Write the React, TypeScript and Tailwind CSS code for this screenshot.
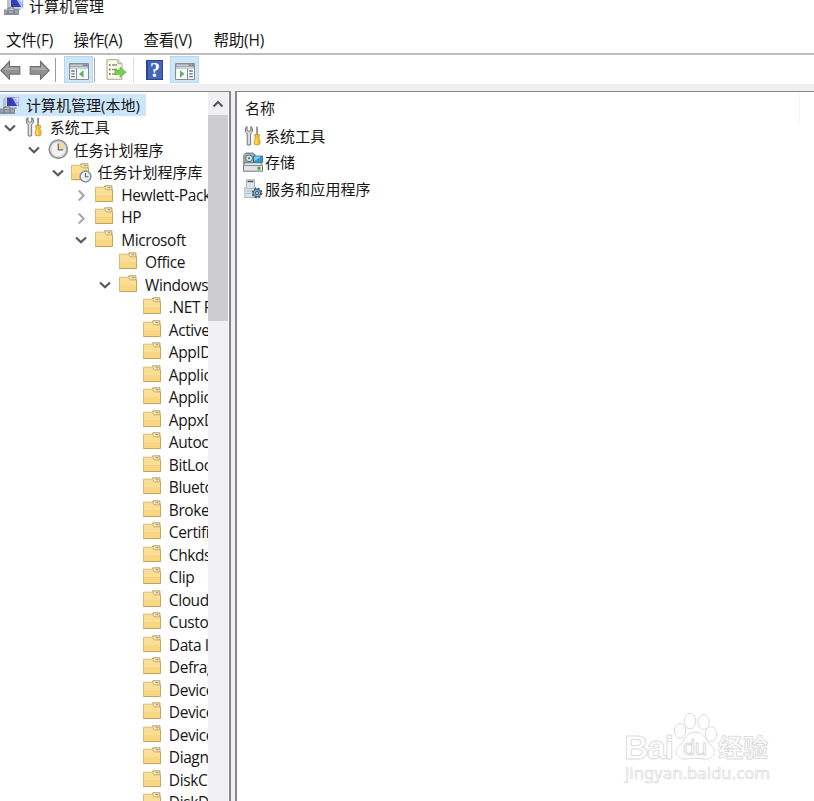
import type { ReactNode } from 'react'
import clsx from 'clsx'

type IconName = 'computer' | 'tools' | 'clock' | 'library' | 'folder'

type Node = {
  label: string
  depth: number
  icon: IconName
  state?: 'open' | 'closed'
}

const INDENT = 23.8

const windowsTasks = [
  '.NET Framework',
  'Active Directory Rights',
  'AppID',
  'Application Experience',
  'ApplicationData',
  'AppxDeploymentClient',
  'Autochk',
  'BitLocker',
  'Bluetooth',
  'BrokerInfrastructure',
  'CertificateServices',
  'Chkdsk',
  'Clip',
  'CloudExperienceHost',
  'Customer Experience',
  'Data Integrity Scan',
  'Defrag',
  'Device Information',
  'Device Setup',
  'DeviceDirectoryClient',
  'Diagnosis',
  'DiskCleanup',
  'DiskDiagnostic',
]

const tree: Node[] = [
  { label: '计算机管理(本地)', depth: 0, icon: 'computer' },
  { label: '系统工具', depth: 1, icon: 'tools', state: 'open' },
  { label: '任务计划程序', depth: 2, icon: 'clock', state: 'open' },
  { label: '任务计划程序库', depth: 3, icon: 'library', state: 'open' },
  { label: 'Hewlett-Packard', depth: 4, icon: 'folder', state: 'closed' },
  { label: 'HP', depth: 4, icon: 'folder', state: 'closed' },
  { label: 'Microsoft', depth: 4, icon: 'folder', state: 'open' },
  { label: 'Office', depth: 5, icon: 'folder' },
  { label: 'Windows', depth: 5, icon: 'folder', state: 'open' },
  ...windowsTasks.map((label): Node => ({ label, depth: 6, icon: 'folder' })),
]

function ComputerIcon() {
  return (
    <svg width="20" height="20" viewBox="0 0 20 20">
      <path d="M3 4l3-2v11H3z" fill="#b9bdc4" />
      <path d="M5.5 1.5H19.5v11H5.5z" fill="#cdd2df" />
      <path d="M7 2.5h11.5v8.5H7z" fill="#3440b8" />
      <path d="M12 2.5h6.5V11h-1.5z" fill="#a9bff0" />
      <path d="M14.5 2.5h4v5z" fill="#d5e0fa" />
      <path d="M11 12.5h5l1 1.5h-7z" fill="#9a9ea7" />
      <path d="M0 13.5h15V19H0z" fill="#8b929b" />
      <path d="M4 14v-2h6v2" fill="none" stroke="#69717b" />
      <path d="M1 16h13" stroke="#b9bfc6" />
      <path d="M4 15v3M10 15v3" stroke="#636b75" />
    </svg>
  )
}

function ToolsIcon() {
  return (
    <svg width="18" height="20" viewBox="0 0 18 20">
      <path
        d="M3 .8C.6 2.4.7 6 3.2 7.6V18.4q1.7 1.6 3.4 0V7.6C9.1 6 9.2 2.4 6.8.8V4.4L5 5.4 3 4.4z"
        fill="#dcdedf"
        stroke="#7b7f83"
        strokeWidth="1.1"
      />
      <path d="M12.2.8h1.7v9h-1.7z" fill="#84898e" />
      <path d="M10.6 8.5h4.9v2.3l-.8 1.2 1.3 1.6V18q-2.9 2.2-5.8 0v-4.4l1.3-1.6-.9-1.2z" fill="#f3bf30" stroke="#c18f22" strokeWidth=".7" />
      <path d="M12.2 13v5" stroke="#ffe798" strokeWidth="1.2" />
    </svg>
  )
}

function ClockIcon() {
  return (
    <svg width="21" height="21" viewBox="0 0 21 21">
      <circle cx="10.3" cy="10.3" r="9" fill="#f3f1ec" stroke="#94979c" strokeWidth="1.9" />
      <path d="M10.3 10.3V3.5a6.8 6.8 0 0 1 6.8 6.8z" fill="#f4d6a0" />
      <circle cx="10.3" cy="10.3" r="7.3" fill="none" stroke="#cfd1d4" strokeWidth=".8" />
      <path d="M10.3 4.5v6.3h5" fill="none" stroke="#656d79" strokeWidth="1.3" />
    </svg>
  )
}

function FolderShape() {
  return (
    <>
      <path d="M.5 2.2h8.2L10 .7h7v16H.5z" fill="#efd080" stroke="#cdb06a" strokeWidth=".8" />
      <path d="M1 2.8h8l2 2.5h6V16H1z" fill="#fbdf94" />
      <path d="M1 10h16v6.2H1z" fill="#f5ce72" opacity=".55" />
      <path d="M9.2 1.1h7.5v3.7h-5.5z" fill="#fdf3d2" stroke="#baa06b" strokeWidth=".8" />
      <path d="M12.5 2.8h3" stroke="#93856a" />
      <path d="M.5 16.6h17V4.5" fill="none" stroke="#bf9f58" strokeWidth=".9" />
    </>
  )
}

function FolderIcon() {
  return (
    <svg width="18" height="17" viewBox="0 0 18 17">
      <FolderShape />
    </svg>
  )
}

function LibraryIcon() {
  return (
    <svg width="21" height="20" viewBox="0 0 21 20">
      <FolderShape />
      <circle cx="14.5" cy="13.5" r="5.4" fill="#eef1f3" stroke="#858d95" strokeWidth="1.5" />
      <path d="M14.5 10v3.8h3" fill="none" stroke="#5a636d" strokeWidth="1.1" />
    </svg>
  )
}

function StorageIcon() {
  return (
    <svg width="20" height="20" viewBox="0 0 20 20">
      <path d="M.8 3l2-2h7.5l2 2v9H.8z" fill="#a6b2b6" stroke="#58656b" strokeWidth=".8" />
      <circle cx="6" cy="6.3" r="3.4" fill="#d9e1e3" stroke="#627077" />
      <circle cx="6" cy="6.3" r="1" fill="#546167" />
      <path d="M10.5 4h9v6.5h-9z" fill="#2e9ccc" stroke="#285f83" strokeWidth=".8" />
      <path d="M11.2 4.6h7L11.2 9z" fill="#82d1ee" />
      <path d="M1.5 10.7h16l2 3v5.5H.5v-5.5z" fill="#e1e5e5" stroke="#626d70" strokeWidth=".9" />
      <path d="M.5 13.5h19" stroke="#879195" />
      <path d="M14.5 14.8h2.8v3h-2.8z" fill="#3ba845" />
    </svg>
  )
}

function ServicesIcon() {
  return (
    <svg width="19" height="20" viewBox="0 0 19 20">
      <path d="M2.5.7h8v7.8H12v10H.8v-10h1.7z" fill="#dfe4e8" stroke="#9aa4ac" strokeWidth=".8" />
      <path d="M3.6 2.5h5.8" stroke="#454e56" strokeWidth="1.4" />
      <path d="M2.5 9.5h7M2.5 12h5M2.5 14.5h4" stroke="#a5b3be" />
      <circle cx="13" cy="14" r="4.4" fill="#7d9fba" stroke="#395b78" strokeWidth="2" strokeDasharray="2 1.45" />
      <circle cx="13" cy="14" r="3.8" fill="#8aabc4" stroke="#426682" />
      <circle cx="13" cy="14" r="1.5" fill="#f2f6f9" stroke="#304c64" />
    </svg>
  )
}

const icons: Record<IconName, ReactNode> = {
  computer: <ComputerIcon />,
  tools: <ToolsIcon />,
  clock: <ClockIcon />,
  library: <LibraryIcon />,
  folder: <FolderIcon />,
}

function Chevron({ open }: { open: boolean }) {
  return (
    <svg width="12" height="12" viewBox="0 0 12 12" fill="none" strokeWidth="2.2">
      {open ? <path d="M1 3.5l5 4.7 5-4.7" stroke="#58585e" /> : <path d="M3.8 1.5l4.8 5-4.8 5" stroke="#a9a9ac" />}
    </svg>
  )
}

function Arrow({ flip }: { flip?: boolean }) {
  return (
    <svg width="21" height="20" viewBox="0 0 21 20" className={clsx(flip && '-scale-x-100')}>
      <path d="M.8 10.5L9.5 1.3v5.2h10.3v7.8H9.5v5z" fill="#929292" stroke="#707070" strokeWidth="1.1" />
      <path d="M3 10l5.5-5.7v3.4h10.2V10z" fill="#a9a9a9" />
    </svg>
  )
}

function PanelIcon({ right }: { right?: boolean }) {
  return (
    <svg width="20" height="17" viewBox="0 0 20 17">
      <path d="M.5.5h19v16H.5z" fill="#f8f9fa" stroke="#858c95" />
      <path d="M1 1h18v4.5H1z" fill="#9ba3ae" />
      <path d="M1.5 2.2h12M1.5 4.4h17" stroke="#e7ebef" strokeWidth=".8" />
      <path d="M14.5 2.2h1M17 2.2h1" stroke="#4d5764" />
      {right ? (
        <>
          <path d="M12.5 5.5v11" stroke="#858c95" />
          <path d="M14.2 8h3.6M14.2 10.8h3.6M14.2 13.6h3.6" stroke="#65758a" strokeWidth="1.3" />
          <path d="M5 7.3l4.5 3.7L5 14.7z" fill="#5cb84a" />
        </>
      ) : (
        <>
          <path d="M7.5 5.5v11" stroke="#858c95" />
          <path d="M2.2 8h3.6M2.2 10.8h3.6M2.2 13.6h3.6" stroke="#65758a" strokeWidth="1.3" />
          <path d="M14.5 7.3L10 11l4.5 3.7z" fill="#5cb84a" />
        </>
      )}
    </svg>
  )
}

function ExportIcon() {
  return (
    <svg width="21" height="21" viewBox="0 0 21 21">
      <path d="M1 .7h11l4 4v15.6H1z" fill="#fcf9e9" stroke="#aaa68d" />
      <path d="M12 .7v4h4" fill="#e6e1c9" stroke="#aaa68d" />
      <path d="M3 6h1.5M3 10.5h1.5M3 15h1.5" stroke="#555" strokeWidth="1.5" />
      <path d="M6 6h5M6 10.5h5M6 15h5" stroke="#8f9186" strokeWidth="1.3" />
      <path d="M9 11h5V8l6.2 5.2-6.2 5.3v-3H9z" fill="#76cf52" stroke="#63b346" strokeWidth=".7" />
    </svg>
  )
}

function HelpIcon() {
  return (
    <div className="flex h-5 w-[17px] items-center justify-center border border-l-2 border-[#2c4593] bg-[#4566b8] font-['Liberation_Serif',serif] text-[20px] leading-none font-bold text-white">
      ?
    </div>
  )
}

function Toolbar() {
  return (
    <div className="flex h-[29px] items-center bg-white">
      <Arrow />
      <div className="ml-2">
        <Arrow flip />
      </div>
      <div className="ml-[5px] h-6 w-px bg-[#9a9a9a]" />
      <div className="ml-2 flex h-[27px] w-[29px] items-center justify-center border border-[#b4d8f2] bg-[#cde6f8] pt-[3px]">
        <PanelIcon />
      </div>
      <div className="ml-px h-6 w-px bg-[#a8a8a8]" />
      <div className="ml-[11px]">
        <ExportIcon />
      </div>
      <div className="ml-[6px] h-6 w-px bg-[#dcdcdc]" />
      <div className="ml-3">
        <HelpIcon />
      </div>
      <div className="ml-[7px] flex h-[27px] w-[29px] items-center justify-center border border-[#b4d8f2] bg-[#cde6f8] pt-[3px]">
        <PanelIcon right />
      </div>
    </div>
  )
}

function TreeRow({ node }: { node: Node }) {
  const { label, depth, icon, state } = node
  return (
    <div className="flex h-[22.5px] shrink-0 items-center" style={{ paddingLeft: Math.max(0, depth - 1) * INDENT }}>
      {depth > 0 && <div className="flex w-[23.8px] shrink-0 pl-[4px]">{state && <Chevron open={state === 'open'} />}</div>}
      <div className={clsx('flex h-[22px] shrink-0 items-center', depth === 0 && 'w-[146px] bg-[#cce6fb]')}>
        <div
          className={clsx(
            'flex w-[26px] shrink-0',
            icon === 'folder' && 'pb-[4px]',
            icon === 'tools' && 'pb-px pl-px',
            icon === 'clock' && 'pb-px',
          )}
        >
          {icons[icon]}
        </div>
        <span className={clsx('pb-px whitespace-nowrap', depth > 3 && 'text-[15.5px] tracking-[-0.4px]')}>{label}</span>
      </div>
    </div>
  )
}

function ListRow({ icon, label }: { icon: ReactNode; label: string }) {
  return (
    <div className="flex h-[26.3px] items-center">
      <div className="flex w-[22px] justify-center pr-[2px]">{icon}</div>
      <span className="tracking-[0.1px]">{label}</span>
    </div>
  )
}

function Watermark() {
  return (
    <svg width="160" height="80" viewBox="0 0 160 80" className="absolute top-[707px] left-[620px]" fill="#fff" stroke="#dcdcdc" strokeWidth="1">
      <text x="4" y="52" fontFamily="Liberation Sans, sans-serif" fontWeight="700" fontSize="34" textLength="50">
        Bai
      </text>
      <ellipse cx="60" cy="24" rx="5.7" ry="7.5" />
      <ellipse cx="70" cy="14" rx="5.7" ry="7.8" />
      <ellipse cx="83.5" cy="15" rx="5.7" ry="7.5" />
      <ellipse cx="91" cy="27" rx="5.7" ry="7.3" />
      <path d="M75 25c-9 0-9 8-15 13-8 7-2 15 6 14 6-1 12-1 18 0 9 1 14-7 7-14-6-5-7-13-16-13z" />
      <text x="63" y="48" fontFamily="Liberation Sans, sans-serif" fontSize="22" textLength="24">
        du
      </text>
      <text x="98" y="50" fontFamily="Noto Sans CJK SC, sans-serif" fontWeight="700" fontSize="25" textLength="50">
        经验
      </text>
      <text x="5" y="72" fontFamily="Noto Sans, sans-serif" fontSize="16.5" textLength="145" lengthAdjust="spacingAndGlyphs" strokeWidth=".7">
        jingyan.baidu.com
      </text>
    </svg>
  )
}

export default function App() {
  return (
    <div className="relative flex h-[801px] w-[814px] flex-col overflow-hidden bg-white font-['Open_Sans','Noto_Sans_CJK_SC',sans-serif] text-[15px] leading-[20px] text-[#161616]">
      <div className="flex h-[22px] shrink-0 items-start pl-[4px]">
        <div className="-mt-1">
          <ComputerIcon />
        </div>
        <span className="-mt-[4px] ml-[5px]">计算机管理</span>
      </div>

      <div className="flex h-[31px] shrink-0 items-center pt-[4px] pl-[6px] text-[15.5px] tracking-[-0.2px]">
        <span className="w-[67.5px]">文件(F)</span>
        <span className="w-[70px]">操作(A)</span>
        <span className="w-[70px]">查看(V)</span>
        <span>帮助(H)</span>
      </div>

      <div className="h-[2px] shrink-0 bg-[#bebec0]" />
      <Toolbar />

      <div className="flex min-h-0 flex-1 bg-[#f0f0f1] pt-[7px]">
        <div className="flex w-[231px] shrink-0 border-t border-r-2 border-[#85858b] bg-white">
          <div className="flex w-[208px] shrink-0 flex-col overflow-hidden pt-[2px]">
            {tree.map((node, i) => (
              <TreeRow key={i} node={node} />
            ))}
          </div>
          <div className="w-[20px] bg-[#f0eff1]">
            <div className="flex h-[23px] items-center justify-center">
              <svg width="12" height="12" viewBox="0 0 12 12" fill="none">
                <path d="M1.5 8.5L6 4l4.5 4.5" stroke="#55555a" strokeWidth="2" />
              </svg>
            </div>
            <div className="h-[206px] bg-[#cdcccf]" />
          </div>
        </div>

        <div className="ml-1 flex-1 border-t border-l-2 border-[#85858b] bg-white">
          <div className="mr-[14px] flex h-[31px] items-center border-r border-[#f3f3f3] pt-px pl-[8px]">名称</div>
          <div className="pl-[6px]">
            <ListRow icon={<ToolsIcon />} label="系统工具" />
            <ListRow icon={<StorageIcon />} label="存储" />
            <ListRow icon={<ServicesIcon />} label="服务和应用程序" />
          </div>
        </div>
      </div>

      <Watermark />
    </div>
  )
}
